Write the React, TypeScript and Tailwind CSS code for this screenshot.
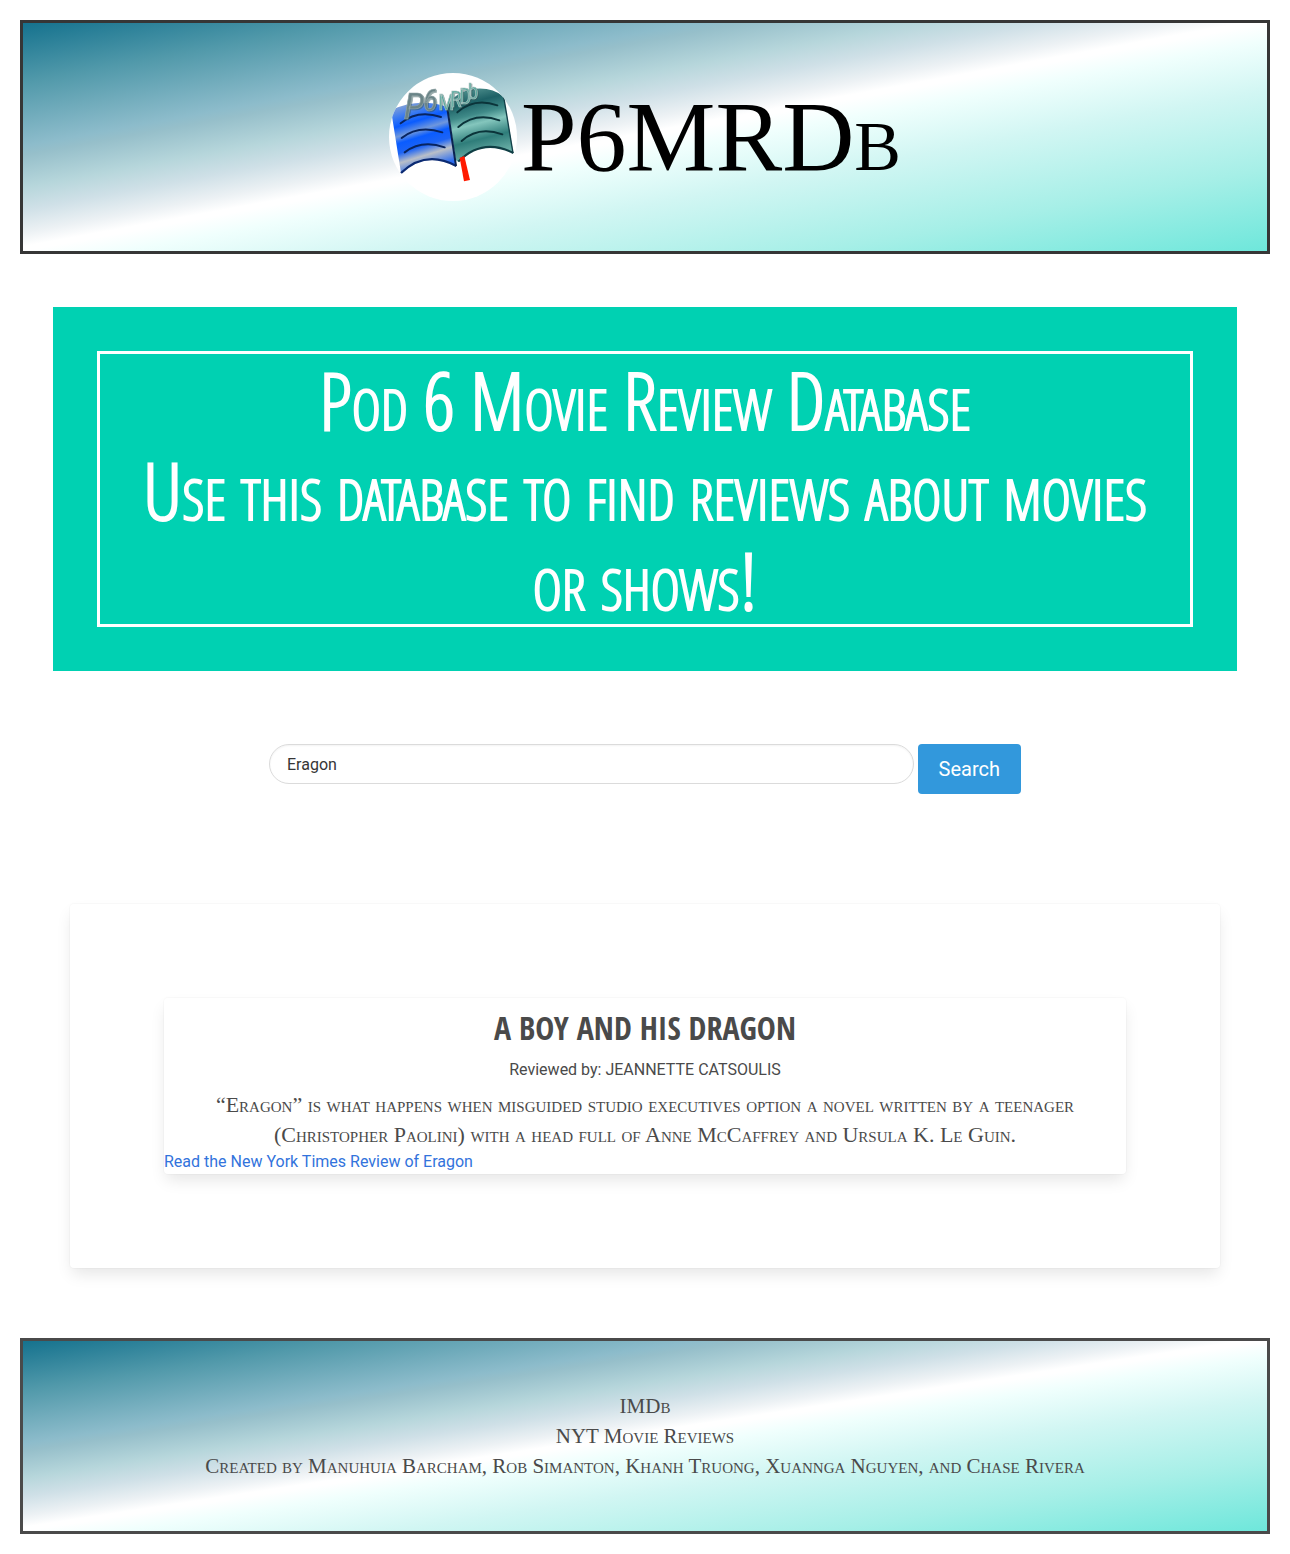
const GRADIENT =
  "bg-[linear-gradient(to_bottom_right,#15728e_0%,#5199aa_13%,#8dbccb_27%,#96bfca_29%,#b6d6db_36%,#cfe0e7_41%,#ecf1f4_46%,#ffffff_49%,#ffffff_50%,#f0fffd_54%,#d1f6f3_65%,#a6efe7_82%,#6ee7db_100%)]";

function Logo() {
  return (
    <svg viewBox="30 39 384 384" className="size-32 shrink-0" role="img" aria-label="P6MRDb logo">
      <defs>
        <linearGradient id="pageLeft" gradientUnits="userSpaceOnUse" x1="90" y1="130" x2="150" y2="325">
          <stop offset="0" stopColor="#7f9fd8" />
          <stop offset="0.14" stopColor="#3f7df0" />
          <stop offset="0.28" stopColor="#0a5cff" />
          <stop offset="0.42" stopColor="#6f97dc" />
          <stop offset="0.52" stopColor="#0a5cff" />
          <stop offset="0.66" stopColor="#1d64f5" />
          <stop offset="0.8" stopColor="#b9bfc8" />
          <stop offset="1" stopColor="#2b6cf0" />
        </linearGradient>
        <linearGradient id="pageRight" gradientUnits="userSpaceOnUse" x1="275" y1="85" x2="325" y2="285">
          <stop offset="0" stopColor="#4f908e" />
          <stop offset="0.2" stopColor="#1d6166" />
          <stop offset="0.38" stopColor="#3f8a88" />
          <stop offset="0.52" stopColor="#84c6bd" />
          <stop offset="0.75" stopColor="#2f7d7a" />
          <stop offset="1" stopColor="#6aaea6" />
        </linearGradient>
        <clipPath id="disc">
          <circle cx="222" cy="231" r="192" />
        </clipPath>
      </defs>
      <circle cx="222" cy="231" r="192" fill="#ffffff" />
      <g clipPath="url(#disc)">
        <path d="M36 150 Q120 112 204 140 L232 318 Q140 272 66 339 Z" fill="url(#pageLeft)" />
        <path d="M206 138 Q230 92 290 86 Q340 82 374 110 L403 279 Q310 234 238 305 L230 300 Z" fill="url(#pageRight)" />
        <path d="M66 339 Q140 268 232 318" fill="none" stroke="#0b2a72" strokeWidth="7" />
        <path d="M204 138 L231 318" fill="none" stroke="#0a2350" strokeWidth="6" />
        <path d="M374 110 L402 279" fill="none" stroke="#123f48" strokeWidth="4" />
        <path d="M238 305 Q310 232 403 279" fill="none" stroke="#0f3e44" strokeWidth="6" />
        <path d="M242 293 L256 288 L273 360 L255 364 Z" fill="#ff1a00" />
        <g fill="none" strokeWidth="6" strokeLinecap="round">
          <path d="M65 190 Q115 148 186 171" stroke="#08245f" />
          <path d="M68 234 Q118 194 190 217" stroke="#08245f" />
          <path d="M77 277 Q128 238 197 262" stroke="#08245f" />
          <path d="M235 157 Q285 112 355 136" stroke="#0b343a" />
          <path d="M238 201 Q290 156 361 181" stroke="#0b343a" />
          <path d="M248 243 Q298 197 370 223" stroke="#0b343a" />
        </g>
      </g>
      <text
        x="74 132 178 214 241 266"
        y="178 152 150 142 131 118"
        fontFamily="'Roboto Condensed', Roboto, sans-serif"
        className="drop-shadow-[3px_3px_1px_rgba(50,85,85,0.5)]"
      >
        <tspan fontSize="112" fontStyle="italic" fill="#6a8487" stroke="#8fa2a4" strokeWidth="2">P</tspan>
        <tspan fontSize="92" fontStyle="italic" fill="#6a8487" stroke="#8fa2a4" strokeWidth="2">6</tspan>
        <tspan fontSize="64" fill="#55a99d" stroke="#a9c0be" strokeWidth="2">MRDb</tspan>
      </text>
    </svg>
  );
}

const SERIF = "font-['Liberation_Serif',serif] [font-variant-caps:small-caps]";
const CARD = "rounded bg-white shadow-[0_8px_16px_-2px_rgba(10,10,10,0.1),0_0_0_1px_rgba(10,10,10,0.02)]";

export default function App() {
  return (
    <div className="bg-white p-5 font-[Roboto,sans-serif] text-base text-[#4a4a4a]">
      <header className={`flex items-center justify-center border-3 border-[#363636] py-[50px] ${GRADIENT}`}>
        <Logo />
        <h1 className={`pl-1 text-[100px] leading-none text-black ${SERIF}`}>P6MRDb</h1>
      </header>

      <main>
        <section className="mx-[33px] mt-[53px] bg-[#00d1b2] p-11">
          <h2 className="border-3 border-white px-6 text-center font-['Open_Sans_Condensed_Light','Open_Sans_Light_Condensed','Open_Sans_Condensed','Roboto_Condensed',sans-serif] text-[80px] leading-[90px] font-light text-white [font-variant-caps:small-caps] [-webkit-text-stroke:2px_white]">
            Pod 6 Movie Review Database
            <br />
            Use this database to find reviews about movies or shows!
          </h2>
        </section>

        <form
          className="mx-auto mt-[73px] flex max-w-[752px] items-start gap-1"
          onSubmit={(event) => event.preventDefault()}
        >
          <input
            type="text"
            aria-label="Movie title"
            defaultValue="Eragon"
            className="h-10 min-w-0 flex-1 rounded-full border border-[#dbdbdb] bg-white px-[17px] text-[#363636] shadow-[inset_0_1px_2px_rgba(10,10,10,0.05)] outline-none"
          />
          <button type="submit" className="h-[50px] rounded bg-[#3298dc] px-[21px] text-xl text-white">
            Search
          </button>
        </form>

        <section className={`mx-[50px] mt-[110px] p-[94px] ${CARD}`}>
          <article className={CARD}>
            <h2 className="text-center font-['Open_Sans_Condensed','Roboto_Condensed',Roboto,sans-serif] text-[32px] leading-[60px] font-bold">
              A BOY AND HIS DRAGON
            </h2>
            <p className="text-center">Reviewed by: JEANNETTE CATSOULIS</p>
            <p className={`mt-2 px-8 text-center text-[22px] leading-[30px] ${SERIF}`}>
              “Eragon” is what happens when misguided studio executives option a novel written by a teenager
              (Christopher Paolini) with a head full of Anne McCaffrey and Ursula K. Le Guin.
            </p>
            <a href="#review" className="block text-[#3273dc]">
              Read the New York Times Review of Eragon
            </a>
          </article>
        </section>
      </main>

      <footer className={`mt-[70px] border-3 border-[#4a4a4a] py-[50px] text-center text-[21px] leading-[30px] ${SERIF} ${GRADIENT}`}>
        <p>IMDb</p>
        <p>NYT Movie Reviews</p>
        <p>Created by Manuhuia Barcham, Rob Simanton, Khanh Truong, Xuannga Nguyen, and Chase Rivera</p>
      </footer>
    </div>
  );
}
